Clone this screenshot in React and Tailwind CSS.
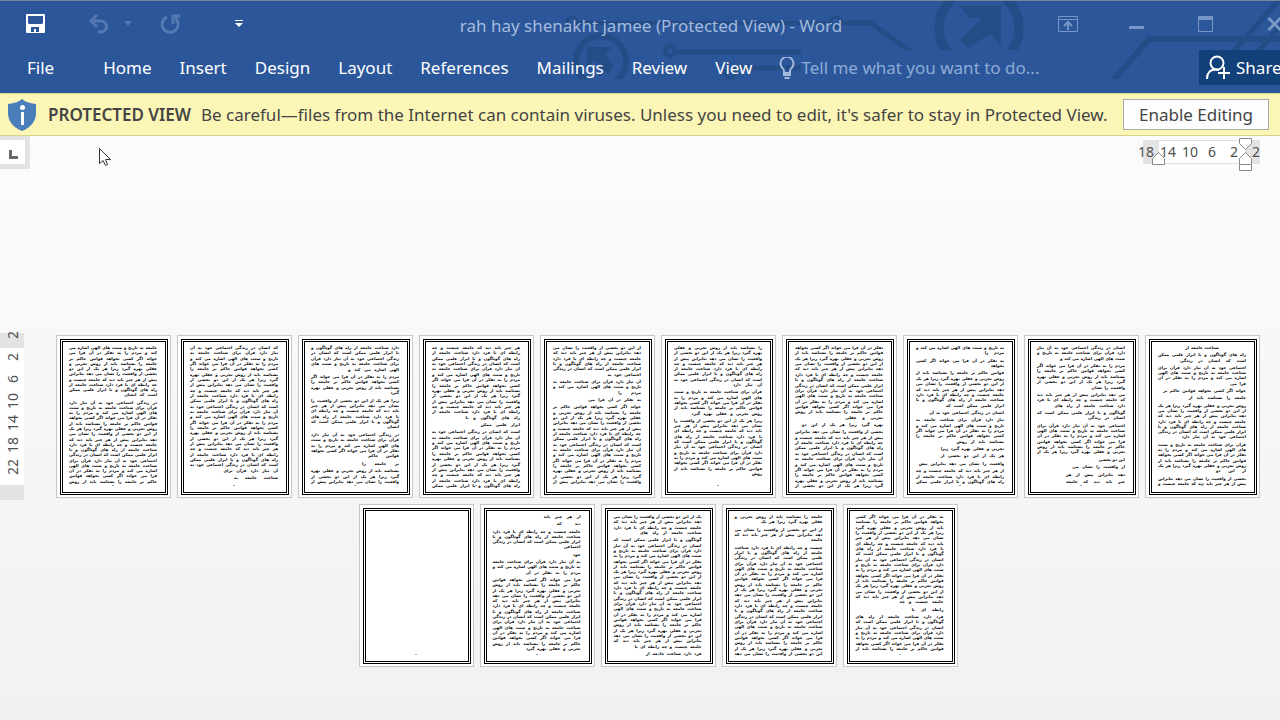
import React, { useState } from 'react';

const tabs = ['Home', 'Insert', 'Design', 'Layout', 'References', 'Mailings', 'Review', 'View'];

const rulerH = [18, 14, 10, 6, 2, 2];
const rulerV = [2, 2, 6, 10, 14, 18, 22];

const words = (
  'شناخت جامعه از راه های گوناگون و با ابزار علمی ممکن است که انسان در زندگی اجتماعی خود به آن نیاز دارد ' +
  'قرآن برای شناخت جامعه به تاریخ و سنت های الهی اشاره می کند و مردم را به تفکر در آن فرا می خواند ' +
  'اگر کسی بخواهد قوانین حاکم بر جامعه را بشناسد باید از روش تجربی و عقلی بهره گیرد زیرا هر یک از این دو ' +
  'بخشی از واقعیت را نشان می دهد بنابراین پیش از هر چیز باید دید که جامعه چیست و چه رابطه ای با فرد دارد'
).split(' ');

// height: 本文の高さ / paras: [行数, 最終行の幅(%)]
const pages = [
  { height: 141, paras: [[1, 38, 'center'], [2, 75], [4, 18], [1, 94], [1, 65], [7, 73], [6, 34], [2, 100]] },
  { height: 139, paras: [[3, 74], [5, 38], [3, 80], [2, 42], [6, 100], [1, 30], [1, 60], [1, 67], [1, 67]] },
  { height: 139, paras: [[2, 22], [2, 9], [7, 66], [1, 85], [5, 54], [1, 72], [1, 72], [1, 97], [3, 100]] },
  { height: 143, paras: [[14, 43], [1, 92], [11, 100]] },
  { height: 131, paras: [[8, 33], [5, 80], [11, 18]] },
  { height: 139, paras: [[6, 38], [3, 26], [1, 60], [15, 100]] },
  { height: 143, paras: [[14, 62], [1, 45], [11, 100]] },
  { height: 139, paras: [[5, 58], [4, 13], [6, 14], [5, 35], [1, 42], [3, 100]] },
  { height: 135, paras: [[24, 62], [1, 50]] },
  { height: 139, paras: [[10, 37], [16, 100]] },
  { height: 137, paras: [[17, 50], [1, 36], [7, 100]] },
  { height: 142, paras: [[2, 70], [3, 12], [21, 100]] },
  { height: 142, paras: [[4, 70], [21, 76], [1, 63]] },
  { height: 137, paras: [[1, 42], [1, 27], [4, 17], [1, 11], [3, 62], [14, 62]] },
  { height: 137, paras: [] },
];

const LINE_CHARS = 38;

// 1行分の単語を取り出す
const takeLine = (start, width) => {
  const max = (LINE_CHARS * width) / 100;
  const line = [];
  let length = 0;
  let i = start;
  while (true) {
    const word = words[i % words.length];
    if (line.length > 0 && length + word.length > max) break;
    line.push(word);
    length += word.length + 1;
    i++;
  }
  return { text: line.join(' '), next: i };
};

const buildLines = (paras, seed) => {
  const lines = [];
  let pos = seed * 13;
  paras.forEach(([count, lastWidth, align], p) => {
    for (let n = 0; n < count; n++) {
      const width = n === count - 1 ? lastWidth : 100;
      const { text, next } = takeLine(pos, width);
      pos = next;
      lines.push({ text, width, align, gap: p > 0 && n === 0 });
    }
  });
  return lines;
};

const Page = ({ page, index }) => {
  const lines = buildLines(page.paras, index);
  return (
    <article className="w-[115px] h-[163px] pt-[3px] pl-[3px] pr-[2px] bg-white border border-[#c6c6c6]">
      <div className="relative h-[156px] w-[108px] border-[3px] border-double border-black pt-[3px] pl-[6px] pr-[8px]">
        <div className="flex flex-col justify-between" style={{ height: page.height }}>
          {lines.map((line, i) => (
            <div key={i} className={line.gap ? 'pt-[2px]' : ''}>
              <p
                className={`h-[5px] leading-[5px] text-[4px] font-bold text-black whitespace-nowrap [text-align-last:justify] ${line.align === 'center' ? 'mx-auto' : ''}`}
                style={{ width: `${line.width}%` }}
              >
                {line.text}
              </p>
            </div>
          ))}
        </div>
        <span className="absolute bottom-[6px] left-[49px] w-[2px] h-px bg-gray-400" />
      </div>
    </article>
  );
};

const HeaderArt = () => (
  <svg className="absolute top-0 right-0 w-[1280px] h-[93px]" viewBox="0 0 1280 93" fill="none" stroke="#244c87" aria-hidden="true">
    <defs>
      <clipPath id="upper"><rect x="0" y="0" width="1280" height="49" /></clipPath>
      <clipPath id="lower"><rect x="0" y="0" width="1280" height="78" /></clipPath>
    </defs>
    <g clipPath="url(#upper)">
      <circle cx="572" cy="21" r="5" strokeWidth="3" />
      <path d="M577 22H831" strokeWidth="4" />
      <circle cx="836" cy="21" r="5" strokeWidth="3" />
      <path d="M841 22H871L914 53" strokeWidth="5" />
      <circle cx="979" cy="27" r="40" strokeWidth="9" />
      <path d="M960 5H1001V45L990 33L968 47L960 40L982 17H970Z" fill="#244c87" stroke="none" />
      <path d="M1231 53L1280 -2M1256 53L1284 21" strokeWidth="5" />
    </g>
    <g clipPath="url(#lower)">
      <circle cx="601" cy="60" r="25" strokeWidth="6" />
      <path d="M587 46H612L605 53L614 66L608 73L594 59L587 66Z" fill="#244c87" stroke="none" />
      <circle cx="670" cy="50" r="5" strokeWidth="4" />
      <path d="M675 51H801" strokeWidth="5" />
      <path d="M735 67H801" strokeWidth="5" />
      <circle cx="730" cy="72" r="5" strokeWidth="3" />
      <path d="M1114 79L1149 38H1280" strokeWidth="6" />
    </g>
  </svg>
);

const QuickAccess = () => (
  <div className="flex items-center w-[244px] pl-[26px] shrink-0">
    <button aria-label="Save" className="mr-[43px]">
      <svg width="19" height="19" viewBox="0 0 19 19">
        <path fill="#fff" fillRule="evenodd" d="M1 0H18Q19 0 19 1V18Q19 19 18 19H1Q0 19 0 18V1Q0 0 1 0ZM2 2V9L3 10H16L17 9V2ZM5 13V18H8V15H10V18H13V13Z" />
      </svg>
    </button>
    <button aria-label="Undo" className="mr-[14px]">
      <svg width="22" height="20" viewBox="0 0 22 20" fill="none" stroke="#5478b2" strokeWidth="3">
        <path d="M2 7H13A5.500 5.500 0 0 1 13 18H10" />
        <path d="M9 1L3 7L9 13" />
      </svg>
    </button>
    <button aria-label="Undo options" className="mr-[28px]">
      <svg width="8" height="5" viewBox="0 0 8 5"><path d="M0 0H8L4 5Z" fill="#5478b2" /></svg>
    </button>
    <button aria-label="Repeat" className="mr-[54px]">
      <svg width="21" height="20" viewBox="0 0 21 20" fill="none" stroke="#5478b2" strokeWidth="3">
        <path d="M7 3A8 8 0 1 0 15 4" />
        <path d="M13 10V2H20" />
      </svg>
    </button>
    <button aria-label="Customize Quick Access Toolbar">
      <svg width="8" height="8" viewBox="0 0 8 8"><path d="M0 0H8V1H0ZM0 3H8L4 7Z" fill="#fff" /></svg>
    </button>
  </div>
);

const WindowButtons = () => (
  <div className="flex items-center w-[222px] shrink-0 overflow-hidden">
    <button aria-label="Ribbon Display Options" className="mr-[51px] shrink-0">
      <svg width="20" height="16" viewBox="0 0 20 16" fill="none" stroke="#7896c6">
        <path d="M.5 .5H19.5V15.5H.5ZM.5 3.5H19.5" />
        <path d="M10 14V6M6 10L10 6L14 10" strokeWidth="2" />
      </svg>
    </button>
    <button aria-label="Minimize" className="mr-[54px] shrink-0">
      <svg width="15" height="16" viewBox="0 0 15 16"><path d="M0 10H15V13H0Z" fill="#7896c6" /></svg>
    </button>
    <button aria-label="Maximize" className="mr-[54px] shrink-0">
      <svg width="15" height="16" viewBox="0 0 15 16" fill="none" stroke="#7896c6">
        <path d="M.5 .5H14.5V15.5H.5Z" />
        <path d="M0 2H15" strokeWidth="4" />
      </svg>
    </button>
    <button aria-label="Close" className="shrink-0">
      <svg width="15" height="16" viewBox="0 0 15 16" fill="none" stroke="#7896c6" strokeWidth="3">
        <path d="M1.500 2L13.500 14M13.500 2L1.500 14" />
      </svg>
    </button>
  </div>
);

const HorizontalRuler = () => (
  <div className="relative flex mr-[13px] mt-1 h-6 items-center text-sm text-[#505050]">
    <div className="absolute left-2 right-[7px] top-0 h-6 flex">
      <div className="w-4 bg-[#e3e3e3]" />
      <div className="flex-1 bg-white border-y border-[#e0e0e0]" />
      <div className="w-[15px] bg-[#e3e3e3]" />
    </div>
    {rulerH.map((n, i) => (
      <span key={i} className="relative w-[22px] text-center">{n}</span>
    ))}
    <svg className="absolute left-0 -top-1 w-[132px] h-[36px]" viewBox="0 0 132 36" fill="#fff" stroke="#8a8a8a">
      <path d="M17.500 28.500V22.500L23.500 16.500L29.500 22.500V28.500Z" />
      <path d="M104.500 2.500H116.500V7.500L110.500 13.500L104.500 7.500Z" />
      <path d="M104.500 28.500V22.500L110.500 16.500L116.500 22.500V28.500Z" />
      <path d="M104.500 28.500H116.500V34.500H104.500Z" />
    </svg>
  </div>
);

const VerticalRuler = () => (
  <div className="relative w-6 h-[167px] mt-[164px] shrink-0 text-sm text-[#505050]">
    <div className="absolute inset-0 flex flex-col">
      <div className="h-[15px] bg-[#e3e3e3]" />
      <div className="flex-1 bg-white" />
      <div className="h-[15px] bg-[#e3e3e3]" />
    </div>
    <div className="relative flex flex-col -mt-[9px] pl-[2px]">
      {rulerV.map((n, i) => (
        <span key={i} className="h-[22px] flex items-center justify-center">
          <span className="-rotate-90">{n}</span>
        </span>
      ))}
    </div>
  </div>
);

const App = () => {
  const [search, setSearch] = useState('');
  const [protectedView, setProtectedView] = useState(true);

  return (
    <div className="relative min-h-screen flex flex-col overflow-hidden bg-linear-to-b from-[#fefefe] to-[#f1f1f1] text-[17px] font-['Noto_Sans','Open_Sans',sans-serif]">
      <header className="relative h-[93px] bg-[#2b579a] border-t border-[#76869c] overflow-hidden text-white">
        <HeaderArt />
        <div className="relative flex h-[45px]">
          <QuickAccess />
          <h1 className="flex-1 pt-[5px] flex items-center justify-center whitespace-nowrap text-[#a5bbdd]">
            rah hay shenakht jamee (Protected View) - Word
          </h1>
          <WindowButtons />
        </div>
        <div className="relative flex items-center h-[43px] pl-[27px] whitespace-nowrap">
          <button className="mr-[49px]">File</button>
          <nav className="flex gap-[28px]">
            {tabs.map((tab) => (
              <button key={tab}>{tab}</button>
            ))}
          </nav>
          <label className="flex items-center ml-[27px] flex-1 min-w-0">
            <svg width="16" height="22" viewBox="0 0 16 22" fill="none" stroke="#a5bbdd" strokeWidth="2" className="shrink-0">
              <path d="M5 16V14Q5 12 3 10.500A6.500 6.500 0 1 1 13 10.500Q11 12 11 14V16Z" />
              <path d="M4 18H12M5.500 21H10.500" />
            </svg>
            <input
              type="text"
              aria-label="Tell me what you want to do"
              value={search}
              onChange={(e) => setSearch(e.target.value)}
              placeholder="Tell me what you want to do..."
              className="ml-[6px] w-[260px] bg-transparent outline-none placeholder:text-[#8fabd6]"
            />
          </label>
          <button className="flex items-center w-[81px] h-[35px] pl-[7px] bg-[#124078] shrink-0">
            <svg width="24" height="25" viewBox="0 0 24 25" fill="none" stroke="#fff" strokeWidth="2" className="shrink-0 mr-[6px]">
              <circle cx="11" cy="8" r="6.500" />
              <path d="M1 24Q1 15 9 14.500L13 15M12 18H24M18 12V24" />
            </svg>
            Share
          </button>
        </div>
      </header>

      {protectedView && (
        <div className="flex items-center h-[43px] bg-[#fcf6b6] border-y border-y-[#d5d38c] pl-2 pr-[11px] whitespace-nowrap text-[#444444]">
          <svg width="28" height="32" viewBox="0 0 28 32" className="shrink-0 mr-3">
            <path d="M14 0Q18 4 28 5V14Q28 26 14 32Q0 26 0 14V5Q10 4 14 0Z" fill="#4a7ebb" />
            <circle cx="14.500" cy="8.500" r="2.500" fill="#fff" />
            <path d="M13 13H16V26H13Z" fill="#fff" />
          </svg>
          <strong className="font-semibold mr-[10px]">PROTECTED VIEW</strong>
          <span className="flex-1 min-w-0">
            Be careful—files from the Internet can contain viruses. Unless you need to edit, it's safer to stay in Protected View.
          </span>
          <button
            onClick={() => setProtectedView(false)}
            className="w-[146px] h-[31px] shrink-0 flex items-center justify-center bg-[#fdfdfd] border border-[#ababab]"
          >
            Enable Editing
          </button>
        </div>
      )}

      <div className="flex justify-between h-[33px]">
        <div className="w-[30px] h-[33px] bg-[#e3e3e3] pt-1 pr-[5px] pb-[5px]">
          <button aria-label="Left Tab" className="block w-full h-6 bg-white">
            <svg width="25" height="24" viewBox="0 0 25 24"><path d="M9 10H12V16H18V19H9Z" fill="#6a6a6a" /></svg>
          </button>
        </div>
        <HorizontalRuler />
      </div>

      <main className="flex flex-1">
        <VerticalRuler />
        <div dir="rtl" className="flex flex-1 flex-wrap content-start justify-center gap-[6px] ml-3 pt-[166px] font-['DejaVu_Sans','Noto_Sans',sans-serif]">
          {pages.map((page, i) => (
            <Page key={i} page={page} index={i} />
          ))}
        </div>
      </main>

      <svg className="absolute left-[99px] top-[148px]" width="12" height="18" viewBox="0 0 12 18">
        <path d="M.5 .5V15.500L4 12.500L6.500 17.500L8.500 16.500L6.500 11.500H11.500Z" fill="#fff" stroke="#333" />
      </svg>
    </div>
  );
};

export default App;
